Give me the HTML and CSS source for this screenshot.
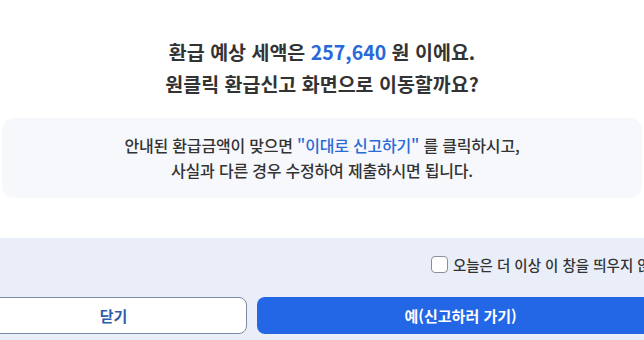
FILE: index.html
```html
<!DOCTYPE html>
<html lang="ko">
<head>
    <meta charset="UTF-8">
    <meta name="viewport" content="width=device-width, initial-scale=1.0">
    <title>환급 신고 안내</title>
    <link rel="stylesheet" href="styles.css">
</head>
<body>

    <div class="dialog">
        <!-- 본문 -->
        <div class="dialog-body">
            <h2 class="title">
                환급 예상 세액은 <span class="amount">257,640</span> 원 이에요.<br>
                원클릭 환급신고 화면으로 이동할까요?
            </h2>
            <div class="notice">
                <p>안내된 환급금액이 맞으면 <span class="point">"이대로 신고하기"</span> 를 클릭하시고,<br>
                사실과 다른 경우 수정하여 제출하시면 됩니다.</p>
            </div>
        </div>

        <!-- 하단 버튼 영역 -->
        <div class="dialog-footer">
            <label class="check-row">
                <input type="checkbox" class="check-box">
                <span>오늘은 더 이상 이 창을 띄우지 않음</span>
            </label>
            <div class="button-row">
                <button class="btn btn-close">닫기</button>
                <button class="btn btn-go">예(신고하러 가기)</button>
            </div>
        </div>
    </div>

</body>
</html>
```

FILE: styles.css
```css
body {
    margin: 0;
    padding: 0;
    overflow: hidden;
    background-color: #fff;
    font-family: "Noto Sans CJK KR", "Noto Sans", sans-serif;
    color: #333;
}

.dialog {
    width: 684px;
    margin-left: -20px;
}

.dialog-body {
    padding: 36px 22px 40px;
}

.title {
    margin: 0 0 18px;
    text-align: center;
    font-size: 19.5px;
    font-weight: 700;
    line-height: 32px;
    color: #333;
}

.title .amount {
    color: #2868d8;
}

.notice {
    background-color: #f7f8fc;
    border-radius: 12px;
    padding: 15px 10px;
    text-align: center;
}

.notice p {
    margin: 0;
    font-size: 16px;
    font-weight: 500;
    line-height: 25px;
    letter-spacing: -0.2px;
}

.notice .point {
    color: #2a6bd6;
}

.dialog-footer {
    background-color: #e9eef8;
    padding: 17px 0 20px;
}

.check-row {
    display: flex;
    justify-content: flex-end;
    align-items: center;
    gap: 5px;
    height: 18px;
    font-size: 14.5px;
    font-weight: 500;
    color: #333;
}

.check-box {
    appearance: none;
    margin: 0;
    width: 17px;
    height: 17px;
    border: 1px solid #8a8f99;
    border-radius: 4px;
    background-color: #fff;
    box-sizing: border-box;
}

.button-row {
    display: flex;
    gap: 10px;
    margin-top: 24px;
}

.btn {
    box-sizing: border-box;
    height: 37px;
    padding: 0;
    border-radius: 8px;
    font-family: "Noto Sans CJK KR", "Noto Sans", sans-serif;
    font-size: 15px;
    font-weight: 700;
    cursor: pointer;
}

.btn-close {
    flex: 266;
    background-color: #fff;
    border: 1px solid #7b8ba6;
    color: #2d5bae;
}

.btn-go {
    flex: 408;
    background-color: #2467e6;
    border: none;
    color: #fff;
}
```
